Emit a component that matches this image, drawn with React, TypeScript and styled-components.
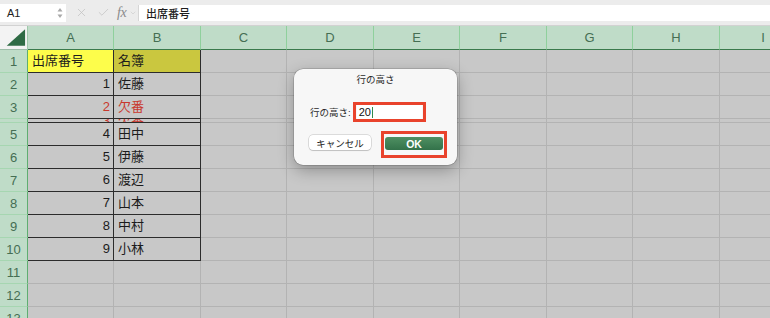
import { Fragment } from 'react';
import styled, { createGlobalStyle } from 'styled-components';
import { X, Check, ChevronDown } from 'lucide-react';

const GlobalStyle = createGlobalStyle`
  html, body {
    margin: 0;
    padding: 0;
    overflow: hidden;
    background: #c8c8c8;
  }
  body {
    font-family: "Liberation Sans", "Noto Sans CJK JP", sans-serif;
  }
`;

const columns = ['A', 'B', 'C', 'D', 'E', 'F', 'G', 'H', 'I'];
const colWidths = [86, 87, 86, 87, 86, 87, 86, 87, 87];

type SheetRow = {
  n: number;
  h: number;
  a?: string;
  b?: string;
  red?: boolean;
};

const rows: SheetRow[] = [
  { n: 1, h: 23, a: '出席番号', b: '名簿' },
  { n: 2, h: 23, a: '1', b: '佐藤' },
  { n: 3, h: 23, a: '2', b: '欠番', red: true },
  { n: 4, h: 4, a: '3', b: '欠番', red: true },
  { n: 5, h: 23, a: '4', b: '田中' },
  { n: 6, h: 23, a: '5', b: '伊藤' },
  { n: 7, h: 23, a: '6', b: '渡辺' },
  { n: 8, h: 23, a: '7', b: '山本' },
  { n: 9, h: 23, a: '8', b: '中村' },
  { n: 10, h: 23, a: '9', b: '小林' },
  { n: 11, h: 23 },
  { n: 12, h: 23 },
  { n: 13, h: 23 },
];

const Page = styled.div`
  position: relative;
  width: 770px;
  height: 318px;
  overflow: hidden;
  background: #c8c8c8;
`;

/* ---------- formula bar ---------- */

const FormulaBar = styled.div`
  height: 26px;
  display: flex;
  align-items: center;
  background: #ececec;
  border-bottom: 1px solid #d2d2d2;
  box-sizing: border-box;
`;

const NameBox = styled.div`
  width: 66px;
  height: 18px;
  background: #fff;
  display: flex;
  align-items: center;
  justify-content: space-between;
  padding: 0 3px 0 7px;
  box-sizing: border-box;
  font-size: 11px;
  color: #222;
`;

const Tools = styled.div`
  width: 72px;
  display: flex;
  align-items: center;
  padding-left: 9px;
  box-sizing: border-box;
  color: #c2c2c2;
`;

const ToolSlot = styled.span<{ $w: number }>`
  width: ${(p) => p.$w}px;
  display: flex;
  align-items: center;
`;

const Fx = styled.span`
  font-family: "Liberation Serif", serif;
  font-style: italic;
  font-size: 14px;
  color: #8a8a8a;
  letter-spacing: -0.5px;
`;

const FormulaInput = styled.div`
  flex: 1;
  height: 16px;
  background: #fff;
  border-left: 1px solid #d6d6d6;
  display: flex;
  align-items: center;
  padding-left: 7px;
  font-size: 11px;
  font-weight: 500;
  color: #1e1e1e;
`;

/* ---------- sheet ---------- */

const Sheet = styled.div<{ $cols: string; $rows: string }>`
  display: grid;
  grid-template-columns: ${(p) => p.$cols};
  grid-template-rows: ${(p) => p.$rows};
`;

const Corner = styled.div`
  background: #f3f3f3;
  border-right: 1px solid #9fc8ab;
  border-bottom: 1px solid #9dbea8;
  box-sizing: border-box;
  display: flex;
`;

const ColHead = styled.div`
  background: #bfdcc8;
  border-right: 1px solid #8fd09c;
  border-bottom: 1px solid #3a7a4c;
  box-sizing: border-box;
  display: flex;
  align-items: center;
  justify-content: center;
  font-size: 13px;
  color: #456e53;
`;

const RowHead = styled.div`
  background: #bfdcc8;
  border-right: 1px solid #5fae71;
  border-bottom: 1px solid #a6d6b1;
  box-sizing: border-box;
  display: flex;
  align-items: center;
  justify-content: center;
  overflow: hidden;
  font-size: 13px;
  color: #456e53;
`;

const Cell = styled.div<{ $fill?: string; $boxed?: boolean; $right?: boolean; $red?: boolean }>`
  background: ${(p) => p.$fill ?? '#c8c8c8'};
  border-right: 1px solid ${(p) => (p.$boxed ? '#2c2c2c' : '#b3b3b3')};
  border-bottom: 1px solid ${(p) => (p.$boxed ? '#2c2c2c' : '#b3b3b3')};
  box-sizing: border-box;
  display: flex;
  align-items: center;
  justify-content: ${(p) => (p.$right ? 'flex-end' : 'flex-start')};
  padding: ${(p) => (p.$right ? '0 3px 0 0' : '0 0 0 4px')};
  overflow: hidden;
  white-space: nowrap;
  font-size: 13px;
  line-height: 16px;
  color: ${(p) => (p.$red ? '#c8382e' : '#1c1c1c')};
`;

/* ---------- dialog ---------- */

const Dialog = styled.div`
  position: absolute;
  left: 294px;
  top: 69px;
  width: 163px;
  height: 96px;
  background: #f7f7f7;
  border-radius: 9px;
  box-shadow: 0 5px 16px rgba(0, 0, 0, 0.3), 0 0 0 0.5px rgba(0, 0, 0, 0.25);
  display: flex;
  flex-direction: column;
  padding-top: 3px;
  box-sizing: border-box;
  color: #2a2a2a;
`;

const DialogTitle = styled.div`
  height: 16px;
  line-height: 16px;
  text-align: center;
  font-size: 9.5px;
`;

const FieldRow = styled.div`
  margin-top: 14px;
  height: 20px;
  display: flex;
  align-items: center;
  gap: 2px;
  padding-left: 16px;
  font-size: 9.5px;
`;

const Mark = styled.div<{ $pad: string }>`
  border: 3px solid #e9432c;
  padding: ${(p) => p.$pad};
  display: flex;
  align-items: flex-start;
`;

const Input = styled.div`
  width: 65px;
  height: 14px;
  background: #fff;
  display: flex;
  align-items: center;
  padding-left: 2px;
  box-sizing: border-box;
  font-size: 11px;
  color: #111;
`;

const Caret = styled.span`
  width: 1px;
  height: 11px;
  background: #2f8a4c;
  margin-left: 1px;
`;

const ButtonRow = styled.div`
  margin-top: 9px;
  display: flex;
  align-items: flex-start;
  gap: 10px;
  padding-left: 15px;
`;

const CancelButton = styled.div`
  margin-top: 4px;
  width: 62px;
  height: 15px;
  background: #fff;
  border-radius: 4px;
  box-shadow: 0 0 0 0.5px rgba(0, 0, 0, 0.22), 0 1px 1px rgba(0, 0, 0, 0.12);
  display: flex;
  align-items: center;
  justify-content: center;
  font-size: 9.5px;
  color: #222;
`;

const OkButton = styled.div`
  width: 58px;
  height: 13px;
  border-radius: 3px;
  background: linear-gradient(#4f9062, #33724a);
  display: flex;
  align-items: center;
  justify-content: center;
  font-size: 10.5px;
  font-weight: bold;
  color: #fff;
`;

const Spinner = () => (
  <svg width="6" height="12" viewBox="0 0 6 12">
    <path d="M3 1 L5.5 4.5 H0.5 Z" fill="#a8a8a8" />
    <path d="M3 11 L5.5 7.5 H0.5 Z" fill="#a8a8a8" />
  </svg>
);

const App = () => {
  const cols = `28px ${colWidths.map((w) => `${w}px`).join(' ')}`;
  const rowSizes = `24px ${rows.map((r) => `${r.h}px`).join(' ')}`;

  return (
    <Page>
      <GlobalStyle />
      <FormulaBar>
        <NameBox>
          A1
          <Spinner />
        </NameBox>
        <Tools>
          <ToolSlot $w={22}>
            <X size={13} strokeWidth={1.4} />
          </ToolSlot>
          <ToolSlot $w={20}>
            <Check size={13} strokeWidth={1.4} />
          </ToolSlot>
          <ToolSlot $w={12}>
            <Fx>fx</Fx>
          </ToolSlot>
          <ToolSlot $w={8}>
            <ChevronDown size={8} strokeWidth={1.5} />
          </ToolSlot>
        </Tools>
        <FormulaInput>出席番号</FormulaInput>
      </FormulaBar>

      <Sheet $cols={cols} $rows={rowSizes}>
        <Corner>
          <svg width="28" height="24" viewBox="0 0 28 24">
            <polygon points="7,20 26,20 26,3" fill="#2f6b45" />
          </svg>
        </Corner>
        {columns.map((c) => (
          <ColHead key={c}>{c}</ColHead>
        ))}
        {rows.map((r) => {
          const boxed = r.n <= 10;
          return (
            <Fragment key={r.n}>
              <RowHead>{r.h > 10 ? r.n : ''}</RowHead>
              <Cell
                $boxed={boxed}
                $right={r.n !== 1}
                $red={r.red}
                $fill={r.n === 1 ? '#fdfd4b' : undefined}
              >
                {r.a}
              </Cell>
              <Cell $boxed={boxed} $red={r.red} $fill={r.n === 1 ? '#cac73f' : undefined}>
                {r.b}
              </Cell>
              {columns.slice(2).map((c) => (
                <Cell key={c} />
              ))}
            </Fragment>
          );
        })}
      </Sheet>

      <Dialog>
        <DialogTitle>行の高さ</DialogTitle>
        <FieldRow>
          行の高さ:
          <Mark $pad="0 1px">
            <Input>
              20
              <Caret />
            </Input>
          </Mark>
        </FieldRow>
        <ButtonRow>
          <CancelButton>キャンセル</CancelButton>
          <Mark $pad="3px 1px 5px">
            <OkButton>OK</OkButton>
          </Mark>
        </ButtonRow>
      </Dialog>
    </Page>
  );
};

export default App;
